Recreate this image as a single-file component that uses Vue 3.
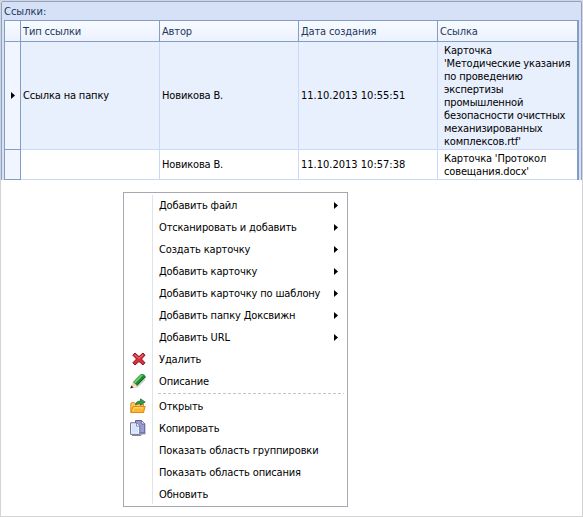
<script setup>
const rows = [
  {
    current: true,
    type: 'Ссылка на папку',
    author: 'Новикова В.',
    date: '11.10.2013 10:55:51',
    link: ['Карточка', "'Методические указания", 'по проведению', 'экспертизы', 'промышленной', 'безопасности очистных', 'механизированных', "комплексов.rtf'"]
  },
  {
    current: false,
    type: '',
    author: 'Новикова В.',
    date: '11.10.2013 10:57:38',
    link: ["Карточка 'Протокол", "совещания.docx'"]
  }
]

const groups = [
  [
    { text: 'Добавить файл', sub: true },
    { text: 'Отсканировать и добавить', sub: true },
    { text: 'Создать карточку', sub: true },
    { text: 'Добавить карточку', sub: true },
    { text: 'Добавить карточку по шаблону', sub: true },
    { text: 'Добавить папку Доксвижн', sub: true },
    { text: 'Добавить URL', sub: true },
    { text: 'Удалить', icon: 'delete' },
    { text: 'Описание', icon: 'pencil' }
  ],
  [
    { text: 'Открыть', icon: 'open' },
    { text: 'Копировать', icon: 'copy' },
    { text: 'Показать область группировки' },
    { text: 'Показать область описания' },
    { text: 'Обновить' }
  ]
]
</script>

<template>
  <main class="page">
    <section class="panel">
      <div class="caption">Ссылки:</div>
      <div class="grid">
        <div class="row head">
          <div class="mark"></div>
          <div class="cell">Тип ссылки</div>
          <div class="cell">Автор</div>
          <div class="cell">Дата создания</div>
          <div class="cell">Ссылка</div>
        </div>
        <div v-for="(r, i) in rows" :key="i" class="row body" :class="{ current: r.current }">
          <div class="mark">
            <svg v-if="r.current" width="4" height="7" viewBox="0 0 4 7"><path d="M0 0L4 3.5L0 7Z" /></svg>
          </div>
          <div class="cell">{{ r.type }}</div>
          <div class="cell">{{ r.author }}</div>
          <div class="cell date">{{ r.date }}</div>
          <div class="cell link"><span v-for="l in r.link" :key="l">{{ l }}</span></div>
        </div>
      </div>
    </section>

    <nav class="menu">
      <div v-for="(g, gi) in groups" :key="gi" class="group">
        <div v-for="m in g" :key="m.text" class="item">
          <span class="icon">
            <svg v-if="m.icon === 'delete'" width="16" height="16" viewBox="-1 0 16 16">
              <path d="M1.8 4.2L4 2L8 5.6L12 2L14 4.2L10.5 8L14 11.8L12 13.9L8 10.5L4 13.9L1.8 11.8L5.5 8Z" fill="#d5303b" stroke="#8c1420" stroke-width="1" stroke-linejoin="round" />
              <path d="M3.6 3.7L8 7.4L12.2 3.7" fill="none" stroke="#f07a80" stroke-width=".9" />
            </svg>
            <svg v-else-if="m.icon === 'pencil'" width="16" height="16" viewBox="0 0 16 16">
              <path d="M2 15.2L8 14.2L15 7.4L15.6 5L7 13Z" fill="#b9bdba" opacity=".7" />
              <path d="M.6 14.8L3 8.8L7.2 12.6Z" fill="#f6d7a4" />
              <path d="M.2 15.4L1.3 12.4L3.6 14.4Z" fill="#222" />
              <path d="M3 9L10.6 1.2Q14.4 .2 15.8 4L7.2 12.8Z" fill="#218a35" />
              <path d="M3.9 9L11.2 1.7L13 2.2L5.4 10.2Z" fill="#6ad46a" />
              <path d="M6.8 12.4L15.4 3.8" fill="none" stroke="#075b20" stroke-width="1" />
            </svg>
            <svg v-else-if="m.icon === 'open'" width="16" height="16" viewBox="0 0 16 16">
              <path d="M.8 14.5V5.7Q.8 4.7 1.8 4.7H4.6L6 6.2H13.5V14.5Z" fill="#ffc94d" stroke="#dd8a16" />
              <path d="M.8 14.5L3 8.5H15.2L13.5 14.5Z" fill="#ffb52f" stroke="#e48a16" />
              <path d="M2.8 13L4.2 9.8H13" fill="none" stroke="#ffe08a" />
              <path d="M5.5 7Q5.8 3.2 10.5 3V.8L15.2 4L10.5 7.3V5.3Q7.5 5.2 5.5 7Z" fill="#359650" stroke="#136a36" stroke-width=".7" />
            </svg>
            <svg v-else-if="m.icon === 'copy'" width="16" height="16" viewBox="0 0 16 16">
              <path d="M5.5 .6H11.5L14.8 3.8V13H5.5Z" fill="#9c9dd0" stroke="#55578f" />
              <path d="M11.3 .8V4H14.6" fill="#eef0ff" stroke="#55578f" stroke-width=".8" />
              <path d="M2 15.4H11V13.8H15.6" fill="none" stroke="#777a91" stroke-width="1" />
              <path d="M.6 2.8H6.4L9.8 6V14.3H.6Z" fill="#fff" stroke="#5d6799" />
              <path d="M2 4.3H5.5V7.3H8.4V12.8H2Z" fill="#d3e3fb" />
              <path d="M6.4 3V6.2H9.6" fill="#fff" stroke="#5d6799" stroke-width=".8" />
            </svg>
          </span>
          <span class="label">{{ m.text }}</span>
          <svg v-if="m.sub" class="arrow" width="4" height="7" viewBox="0 0 4 7"><path d="M0 0L4 3.5L0 7Z" /></svg>
        </div>
      </div>
    </nav>
  </main>
</template>

<style>
body { margin: 0; background: #fff; }
</style>

<style scoped>
* { box-sizing: border-box; }
.page {
  width: 583px;
  height: 517px;
  border: 1px solid #d4d4d4;
  background: #fff;
  font: 11px/13px "DejaVu Sans Condensed", "DejaVu Sans", sans-serif;
  letter-spacing: -0.15px;
  color: #000;
  white-space: nowrap;
  overflow: hidden;
}
.panel {
  height: 179px;
  width: 581px;
  padding: 0 2px;
  border: 1px solid #8ba3c7;
  border-bottom: 0;
  border-radius: 2px 2px 0 0;
  background: #d6e1f7;
}
.caption { height: 18px; padding-top: 3px; color: #1e395b; letter-spacing: 0; }
.grid {
  border: 1px solid #839ec4;
  border-right-width: 2px;
  border-bottom: 0;
}
.row { display: grid; grid-template-columns: 16px 139px 139px 139px 1fr; }
.head { height: 21px; background: linear-gradient(#f7faff, #ecf2fe); color: #1e395b; border-bottom: 1px solid #839ec4; }
.cell { display: flex; align-items: center; padding-left: 2px; border-right: 1px solid #c9daf8; border-bottom: 1px solid #c9daf8; }
.head .cell { border-bottom: 0; border-color: #839ec4; }
.cell:last-child { border-right: 0; }
.date { letter-spacing: 0; }
.mark { display: flex; align-items: center; justify-content: center; border-right: 1px solid #839ec4; border-bottom: 1px solid #839ec4; background: #f0f5ff; }
.head .mark { border-bottom: 0; background: none; }
.body { height: 30px; background: #fff; }
.body.current { height: 108px; background: #e8effd; }
.body .link { flex-direction: column; align-items: flex-start; justify-content: center; padding-left: 6px; }
.menu {
  width: 225px;
  height: 315px;
  margin: 12px 0 0 122px;
  padding: 1px 2px 0;
  border: 1px solid #a7a7b1;
  background: linear-gradient(90deg, transparent 28px, #e2e3ea 28px, #e2e3ea 29px, transparent 29px) 0 2px / 100% 309px no-repeat #fff;
}
.group + .group { position: relative; padding-top: 3px; }
.group + .group::before {
  content: "";
  position: absolute;
  top: 1px;
  left: 32px;
  right: 1px;
  height: 1px;
  background: repeating-linear-gradient(90deg, #c4c4c4 0 3px, transparent 3px 5px);
}
.item { display: flex; align-items: center; height: 22px; padding-right: 7px; }
.icon { display: flex; width: 33px; padding-left: 4px; }
.label { flex: 1; }
</style>
